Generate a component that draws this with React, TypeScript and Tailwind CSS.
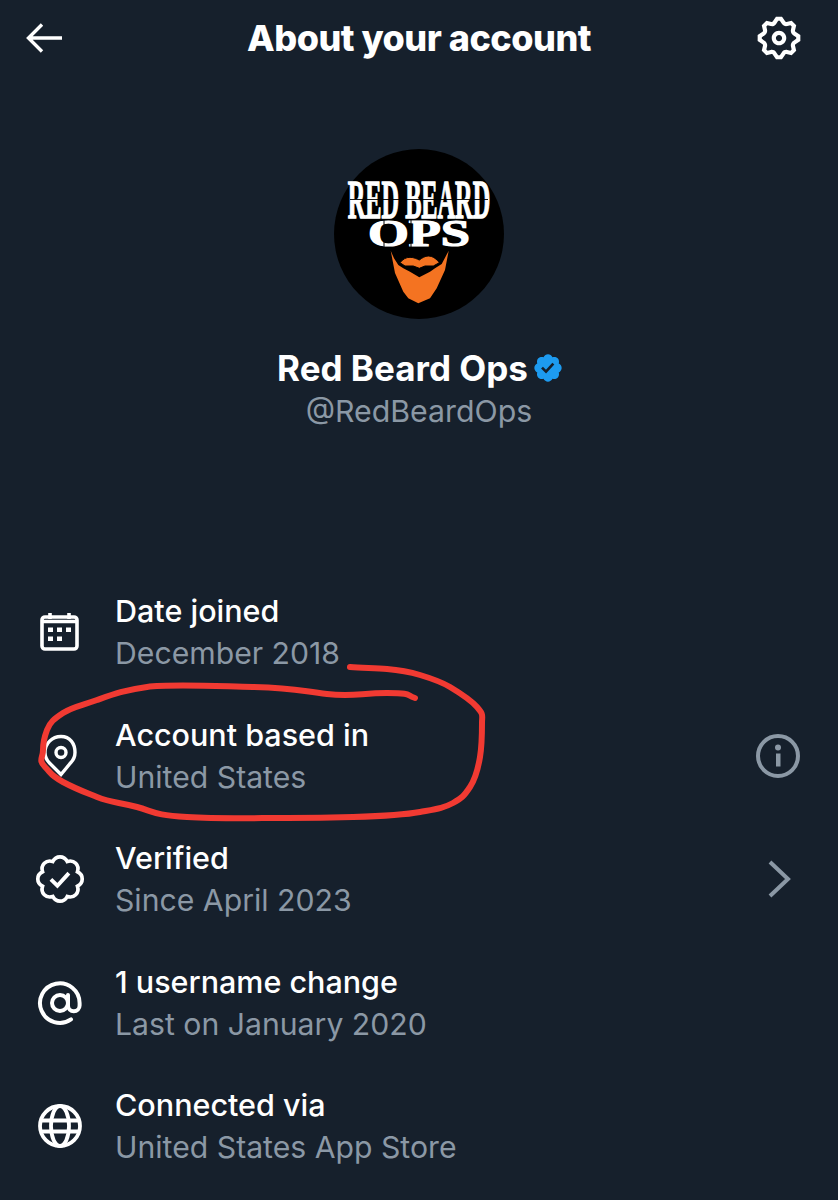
const BADGE_OUTLINE =
  "M22.25 12c0-1.43-.88-2.67-2.19-3.34.46-1.39.2-2.9-.81-3.91s-2.52-1.27-3.91-.81c-.66-1.31-1.91-2.19-3.34-2.19s-2.67.88-3.33 2.19c-1.4-.46-2.91-.2-3.92.81s-1.26 2.52-.8 3.91c-1.31.67-2.2 1.91-2.2 3.34s.89 2.67 2.2 3.34c-.46 1.39-.21 2.9.8 3.91s2.52 1.26 3.91.81c.67 1.31 1.91 2.19 3.34 2.19s2.68-.88 3.34-2.19c1.39.45 2.9.2 3.91-.81s1.27-2.52.81-3.91c1.31-.67 2.19-1.91 2.19-3.34z";

const BackIcon = () => (
  <svg viewBox="0 0 36 30" fill="none" stroke="white" strokeWidth={3.4} className="ml-[-12px] h-[30px] w-[36px]">
    <path d="M36 15H3M16 1.5 2.5 15 16 28.5" />
  </svg>
);

const GearIcon = () => (
  <svg viewBox="0 0 24 24" fill="white" className="m-[-4px] h-[50px] w-[50px]">
    <path d="M10.54 1.75h2.92l1.57 2.36c.11.17.32.25.53.21l2.53-.59 2.17 2.17-.58 2.54c-.05.2.04.41.21.53l2.36 1.57v2.92l-2.36 1.57c-.17.12-.26.33-.21.53l.58 2.54-2.17 2.17-2.53-.59c-.21-.04-.42.04-.53.21l-1.57 2.36h-2.92l-1.58-2.36c-.11-.17-.32-.25-.52-.21l-2.54.59-2.17-2.17.58-2.54c.05-.2-.03-.41-.21-.53l-2.35-1.57v-2.92L4.1 8.97c.18-.12.26-.33.21-.53L3.73 5.9 5.9 3.73l2.54.59c.2.04.41-.04.52-.21l1.58-2.36zm1.07 2l-.98 1.47C10.05 6.08 9 6.5 7.99 6.27l-1.46-.34-.6.6.33 1.47c.24 1.01-.18 2.07-1.05 2.64l-1.46.98v.78l1.46.98c.87.57 1.29 1.63 1.05 2.64l-.33 1.47.6.6 1.46-.34c1.01-.23 2.06.19 2.64 1.05l.98 1.47h.78l.97-1.47c.58-.86 1.63-1.28 2.65-1.05l1.45.34.61-.6-.34-1.47c-.23-1.01.18-2.07 1.05-2.64l1.47-.98v-.78l-1.47-.98c-.87-.57-1.28-1.63-1.05-2.64l.34-1.47-.61-.6-1.45.34c-1.02.23-2.07-.19-2.65-1.05l-.97-1.47h-.78zM12 10.5c-.83 0-1.5.67-1.5 1.5s.67 1.5 1.5 1.5c.82 0 1.5-.67 1.5-1.5s-.68-1.5-1.5-1.5zM8.5 12c0-1.93 1.56-3.5 3.5-3.5 1.93 0 3.5 1.57 3.5 3.5s-1.57 3.5-3.5 3.5c-1.94 0-3.5-1.57-3.5-3.5z" />
  </svg>
);

const CalendarIcon = () => (
  <svg viewBox="0 0 44 44" fill="none" stroke="white" strokeWidth={3.6} className="h-11 w-11">
    <rect x="4" y="7" width="35" height="32" rx="3" />
    <path d="M4 11.5h35M12 3v6M31 3v6" />
    <path
      d="M10 17.5h5v4.5h-5zM19 17.5h5v4.5h-5zM28 17.5h5v4.5h-5zM10 26.5h5V31h-5zM19 26.5h5V31h-5z"
      fill="white"
      stroke="none"
    />
  </svg>
);

const PinIcon = () => (
  <svg viewBox="0 0 44 44" fill="none" stroke="white" strokeWidth={3.4} className="h-11 w-11">
    <path d="M23 40.5 11.500 29C8 25.500 7 21.500 7 18.500 7 9.500 14 2.500 23 2.500s14 7 14 16c0 3-1 7-4.500 10.500z" />
    <circle cx="23" cy="18.500" r="5" />
  </svg>
);

const VerifiedIcon = () => (
  <svg viewBox="0 0 24 24" fill="none" stroke="white" strokeWidth={1.7} className="m-[-4px] h-[52px] w-[52px]">
    <path d={BADGE_OUTLINE} />
    <path d="M7.8 12.2l3 2.900 5.300-5.800" strokeWidth={1.8} />
  </svg>
);

const AtIcon = () => (
  <svg viewBox="0 0 24 24" fill="none" stroke="white" strokeWidth={2} strokeLinecap="round" className="m-[-2px] h-12 w-12">
    <circle cx="12" cy="12" r="4" />
    <path d="M16 8v5.200a2.900 2.900 0 0 0 5.800 0V12a9.900 9.900 0 1 0-4.300 8.200" />
  </svg>
);

const GlobeIcon = () => (
  <svg viewBox="0 0 44 44" fill="none" stroke="white" strokeWidth={3.8} className="h-11 w-11">
    <circle cx="22" cy="22" r="20" />
    <ellipse cx="22" cy="22" rx="9" ry="20" />
    <path d="M3 16.500h38M3 27.500h38" />
  </svg>
);

const InfoIcon = () => (
  <svg viewBox="0 0 44 44" fill="none" stroke="#8b98a5" strokeWidth={4} className="h-11 w-11">
    <circle cx="22" cy="22" r="20" />
    <circle cx="22" cy="13.500" r="3" fill="#8b98a5" stroke="none" />
    <path d="M20 19.500h4.500v13H20z" fill="#8b98a5" stroke="none" />
  </svg>
);

const ChevronIcon = () => (
  <svg viewBox="0 0 44 44" fill="none" stroke="#8b98a5" strokeWidth={4} className="h-11 w-11">
    <path d="M14 5 32 22 14 39" />
  </svg>
);

const Avatar = () => (
  <svg viewBox="0 0 170 170" className="h-[170px] w-[170px]">
    <circle cx="85" cy="85" r="85" fill="#000" />
    <text
      transform="translate(85 69) scale(0.45 1)"
      textAnchor="middle"
      fill="white"
      stroke="white"
      strokeWidth={1.4}
      fontSize="54"
      fontWeight="700"
      className="font-['Liberation_Serif']"
    >
      RED BEARD
    </text>
    <path d="M16 50.500h138" stroke="#000" strokeWidth={0.9} />
    <text
      transform="translate(85 97) scale(1.42 1)"
      textAnchor="middle"
      fill="white"
      stroke="white"
      strokeWidth={1.2}
      fontSize="37"
      fontWeight="700"
      className="font-['Liberation_Serif']"
    >
      OPS
    </text>
    <path d="M50 71v27M77 71v27" stroke="#000" strokeWidth={1} />
    <path
      d="M56.700 101.700 60 109.300 64.300 116 69.300 119.300 76 122.700 85.300 128.300 96 122.700 101 119.300 107.700 115 114.700 101.700 111 121 102.700 139.300 96 149.300 84.300 154.300 74.300 149.300 69.300 142.700 61 124z"
      fill="#f47321"
    />
    <path
      d="M66 113.700C69 110 72 108.300 76 108.300S83 110 85.300 111C88 109 91 107 94.300 107 99 107 103 110.500 105.300 113.700L99.300 117H91L85.300 119.300 79.300 117H71z"
      fill="#f47321"
      stroke="#000"
      strokeWidth={1}
    />
  </svg>
);

const rows = [
  { icon: <CalendarIcon />, title: "Date joined", sub: "December 2018" },
  { icon: <PinIcon />, title: "Account based in", sub: "United States", right: <InfoIcon /> },
  { icon: <VerifiedIcon />, title: "Verified", sub: "Since April 2023", right: <ChevronIcon /> },
  { icon: <AtIcon />, title: "1 username change", sub: "Last on January 2020" },
  { icon: <GlobeIcon />, title: "Connected via", sub: "United States App Store" },
];

const Scribble = () => (
  <svg viewBox="0 0 838 1200" fill="none" className="pointer-events-none absolute inset-0 h-[1200px] w-[838px]">
    <path
      d="M350 667C362 668 375 668 387 669S410 672 420 675 440 681 450 687 470 699 477 707 482 715 482 723 482 745 480 757 476 778 470 787 462 798 453 803 436 809 420 812 385 816 353 817 320 818 287 818 220 819 187 817 155 812 137 807 112 803 97 797 76 789 63 782 52 774 45 767 43 758 43 750 44 738 47 730 54 719 63 713 80 706 97 700 125 690 147 687 210 686 253 687 300 691 327 694 360 693 387 693 405 695 415 698"
      stroke="#f13a32"
      strokeWidth={6}
      strokeLinecap="round"
      strokeLinejoin="round"
    />
  </svg>
);

export default function App() {
  return (
    <div className="relative h-[1200px] w-[838px] overflow-hidden bg-[#16202c] font-['Inter',sans-serif] text-white">
      <header className="grid h-[76px] grid-cols-[1fr_auto_1fr] items-center px-[38px]">
        <BackIcon />
        <h1 className="text-[36px] font-extrabold tracking-[-0.5px]">About your account</h1>
        <div className="flex justify-end">
          <GearIcon />
        </div>
      </header>

      <section className="mt-[73px] flex flex-col items-center">
        <Avatar />
        <div className="mt-[28px] flex h-[42px] items-center gap-[7px]">
          <span className="text-[35px] font-bold">Red Beard Ops</span>
          <svg viewBox="0 0 24 24" fill="#1d9bf0" className="m-[-3px] h-[32px] w-[32px]">
            <path d="M22.25 12c0-1.43-.88-2.67-2.19-3.34.46-1.39.2-2.9-.81-3.91s-2.52-1.27-3.91-.81c-.66-1.31-1.91-2.19-3.34-2.19s-2.67.88-3.33 2.19c-1.4-.46-2.91-.2-3.92.81s-1.26 2.52-.8 3.91c-1.31.67-2.2 1.91-2.2 3.34s.89 2.67 2.2 3.34c-.46 1.39-.21 2.9.8 3.91s2.52 1.26 3.91.81c.67 1.31 1.91 2.19 3.34 2.19s2.68-.88 3.34-2.19c1.39.45 2.9.2 3.91-.81s1.27-2.52.81-3.91c1.31-.67 2.19-1.91 2.19-3.34zm-11.71 4.2L6.8 12.46l1.41-1.42 2.26 2.26 4.8-5.23 1.47 1.36-6.2 6.77z" />
          </svg>
        </div>
        <div className="h-[44px] text-[30.3px] leading-[44px] text-[#8b98a5]">@RedBeardOps</div>
      </section>

      <ul className="mt-[157px] flex flex-col gap-[39.5px] px-[38px]">
        {rows.map((row) => (
          <li key={row.title} className="flex h-[84px] items-center">
            <div className="flex h-11 w-11 shrink-0 items-center justify-center">{row.icon}</div>
            <div className="ml-[33px] flex-1">
              <div className="text-[30.5px] font-medium leading-[42px]">{row.title}</div>
              <div className="text-[30.2px] leading-[42px] text-[#8b98a5]">{row.sub}</div>
            </div>
            {row.right && <div className="flex h-11 w-11 shrink-0 items-center justify-center">{row.right}</div>}
          </li>
        ))}
      </ul>

      <Scribble />
    </div>
  );
}
